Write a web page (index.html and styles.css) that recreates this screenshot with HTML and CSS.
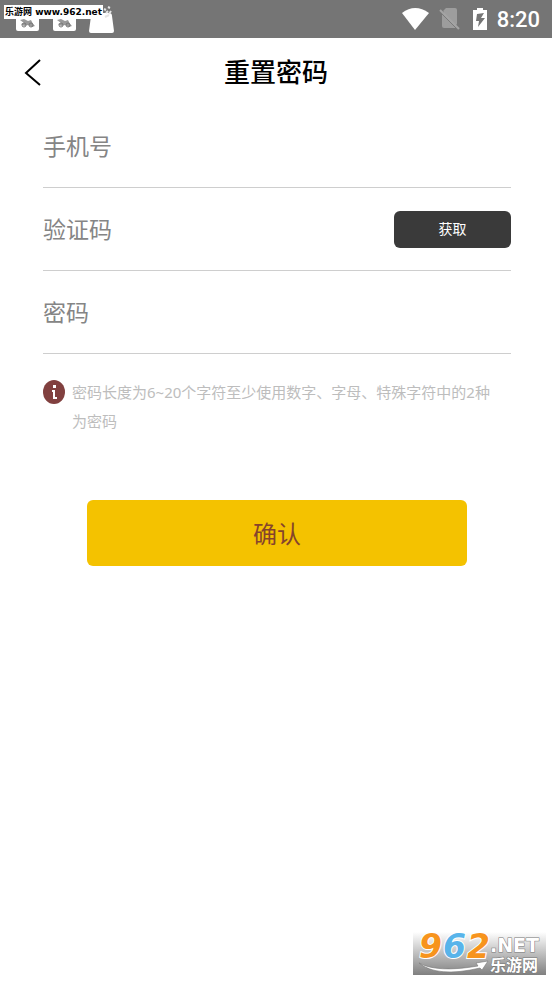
FILE: index.html
```html
<!DOCTYPE html>
<html lang="zh-CN">
<head>
<meta charset="utf-8">
<meta name="viewport" content="width=device-width, initial-scale=1">
<title>重置密码</title>
<link rel="stylesheet" href="styles.css">
</head>
<body>
<div class="status">
  <svg class="notices" width="116" height="38" viewBox="0 0 116 38" aria-hidden="true">
    <g id="photo">
      <rect x="16" y="8" width="23" height="23" rx="2" fill="#fff"/>
      <path d="M20 20l4-1 4 2 3-1 2 4 2 2-3 1-4-2-4 1-3-2 3-1z" fill="#999"/>
      <circle cx="24" cy="25" r="2" fill="none" stroke="#777"/>
      <circle cx="31" cy="25" r="2" fill="none" stroke="#777"/>
    </g>
    <use href="#photo" x="37"/>
    <path d="M91 16q1-3 4-3h14q3 0 3 3l2 15q0 2-2 2H91q-2 0-2-2z" fill="#fff"/>
    <path d="M104 9l2 1m2-3l2 1m-4 5l2-2m1 3l2-3m-6 6l4-2" stroke="#e4e4e4" stroke-width="2"/>
  </svg>
  <div class="system">
    <svg width="28" height="24" viewBox="0 0 28 24" aria-hidden="true"><path d="M0 6Q13-4 27 6L13 23z" fill="#fff"/></svg>
    <svg width="24" height="24" viewBox="0 0 24 24" aria-hidden="true"><path d="M7 1h9q2 0 2 2v15L4 4zM3 6l15 15H5q-2 0-2-2z" fill="#9d9d9d"/><path d="M5 3h12v17H4z" fill="#9d9d9d"/><path d="M1 5l17 17" stroke="#757575" stroke-width="1"/><path d="M1 3l19 19" stroke="#a4a4a4" stroke-width="2"/></svg>
    <svg width="16" height="24" viewBox="0 0 16 24" aria-hidden="true"><path d="M1 3h4V1h6v2h4v20H1z" fill="#fff"/><path d="M12 6L5 7l-1 7h3l-1 6 7-9H9z" fill="#757575"/></svg>
    <span class="clock">8:20</span>
  </div>
  <span class="site-tag">乐游网 www.962.net</span>
</div>

<header class="header">
  <button class="back" type="button" aria-label="返回">
    <svg width="18" height="28" viewBox="0 0 18 28" aria-hidden="true"><path d="M16 2L2 15l14 12" fill="none" stroke="#000" stroke-width="2"/></svg>
  </button>
  <h1 class="title">重置密码</h1>
</header>

<form class="form">
  <div class="field">
    <input class="input" type="tel" placeholder="手机号" aria-label="手机号">
  </div>
  <div class="field">
    <input class="input" type="text" placeholder="验证码" aria-label="验证码">
    <button class="get-code" type="button">获取</button>
  </div>
  <div class="field">
    <input class="input" type="password" placeholder="密码" aria-label="密码">
  </div>
  <div class="hint">
    <svg class="info" width="22" height="24" viewBox="0 0 22 24" aria-hidden="true">
      <ellipse cx="11" cy="12" rx="11" ry="12" fill="#81403f"/>
      <path d="M10 5h3v3h-3zM9 10h3v7h2v2h-4v-7H9z" fill="#fff"/>
    </svg>
    <p class="hint-text">密码长度为6~20个字符至少使用数字、字母、特殊字符中的2种为密码</p>
  </div>
  <button class="confirm" type="submit">确认</button>
</form>

<div class="watermark">
  <svg class="mark" width="133" height="43" viewBox="0 0 133 43" role="img" aria-label="962.NET 乐游网">
    <g class="mark-digits">
      <text x="6" y="26" fill="#f7941d">9</text>
      <text x="30" y="26" fill="#58b4ea">6</text>
      <text x="54" y="26" fill="#f7941d">2</text>
    </g>
    <path d="M6 31q18 10 59 3l-2-3 12-2-6 9-2-2Q24 46 6 31z" fill="#fff" stroke="#777" stroke-width=".6"/>
    <text class="mark-net" x="77" y="20">.NET</text>
    <text class="mark-name" x="77" y="39">乐游网</text>
  </svg>
</div>
</body>
</html>
```

FILE: styles.css
```css
* {
  box-sizing: border-box;
}

body {
  margin: 0;
  min-height: 100vh;
  position: relative;
  background: #fff;
  font-family: "Noto Sans", "Noto Sans CJK SC", sans-serif;
}

button {
  border: 0;
  padding: 0;
  font-family: inherit;
  cursor: pointer;
}

svg {
  display: block;
}

.status {
  position: relative;
  display: flex;
  justify-content: space-between;
  height: 38px;
  background: #757575;
}

.system {
  display: flex;
  align-items: center;
  gap: 9px;
  padding-right: 12px;
}

.clock {
  font: 500 22px/38px Roboto, sans-serif;
  padding-top: 2px;
  color: #fff;
}

.site-tag {
  position: absolute;
  left: 4px;
  top: 5px;
  padding: 0 1px;
  background: #fff;
  color: #000;
  font: bold 9px/14px "DejaVu Sans", "Noto Sans CJK SC", sans-serif;
  white-space: nowrap;
}

.header {
  display: grid;
  grid-template-columns: 64px 1fr 64px;
  align-items: center;
  height: 67px;
}

.back {
  display: flex;
  align-items: center;
  height: 48px;
  padding-left: 24px;
  background: none;
}

.title {
  margin: 0;
  padding-bottom: 2px;
  text-align: center;
  font-size: 26px;
  line-height: 36px;
  font-weight: 500;
  font-family: "Noto Sans CJK SC", sans-serif;
  color: #000;
}

.form {
  display: flex;
  flex-direction: column;
  padding: 0 41px 0 43px;
}

.field {
  display: flex;
  align-items: center;
  height: 83px;
  border-bottom: 1px solid #cecece;
}

.input {
  flex: 1;
  min-width: 0;
  height: 48px;
  padding: 0 0 2px;
  border: 0;
  outline: 0;
  background: none;
  font-family: "Noto Sans CJK SC", sans-serif;
  font-size: 23px;
  color: #222;
}

.input::placeholder {
  color: #858585;
  opacity: 1;
}

.get-code {
  width: 117px;
  height: 37px;
  padding-bottom: 3px;
  border-radius: 6px;
  background: #3a3a3a;
  color: #fff;
  font-size: 14px;
}

.hint {
  display: flex;
  gap: 7px;
  margin: 24px 0 64px;
}

.info {
  flex: none;
  margin-top: 2px;
}

.hint-text {
  margin: 0;
  padding-right: 12px;
  font-size: 15px;
  line-height: 29px;
  color: #bdbdbd;
}

.confirm {
  height: 66px;
  margin: 0 44px;
  padding-bottom: 2px;
  border-radius: 6px;
  background: #f4c200;
  color: #85442c;
  font-size: 24px;
}

.watermark {
  position: absolute;
  right: 6px;
  bottom: 6px;
  background: linear-gradient(#fff, #808080);
}

.mark {
  overflow: visible;
}

.mark-digits {
  font: italic bold 33px "DejaVu Sans", sans-serif;
  stroke: #fff;
  stroke-width: 2px;
  paint-order: stroke;
}

.mark-net {
  font: bold 19px "DejaVu Sans", sans-serif;
  fill: #fff;
  stroke: #777;
  stroke-width: 1px;
  paint-order: stroke;
}

.mark-name {
  font: bold 16px/16px "Noto Sans CJK SC", sans-serif;
  fill: #fff;
  stroke: #777;
  stroke-width: 1px;
  paint-order: stroke;
}
```
